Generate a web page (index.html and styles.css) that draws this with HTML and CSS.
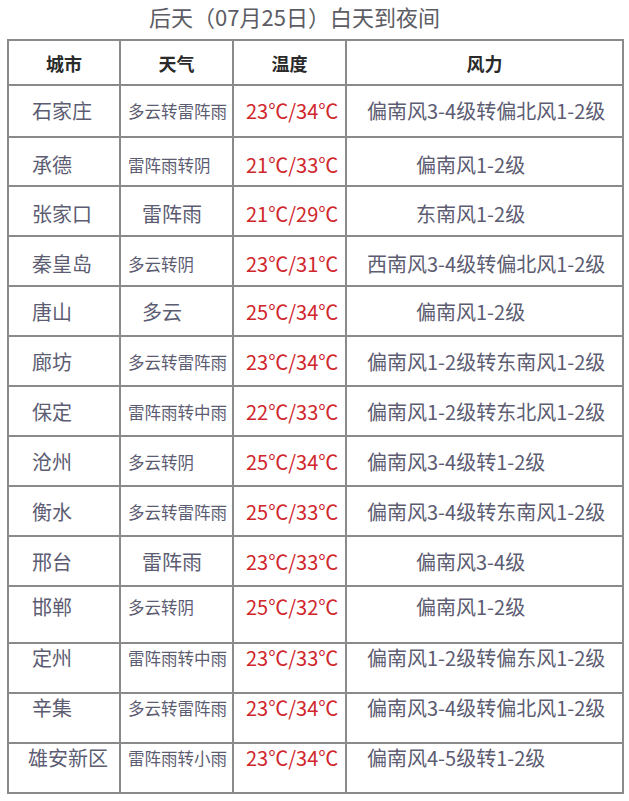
FILE: index.html
```html
<!DOCTYPE html>
<html lang="zh-CN">
<head>
<meta charset="utf-8">
<title>后天（07月25日）白天到夜间</title>
<link rel="stylesheet" href="styles.css">
</head>
<body>
<div class="page">
  <h1 class="title">后天（07月25日）白天到夜间</h1>
  <div class="grid">
    <div class="hd">城市</div><div class="hd">天气</div><div class="hd">温度</div><div class="hd">风力</div>

    <div class="c city r1">石家庄</div><div class="c wx r1">多云转雷阵雨</div><div class="c tp r1">23℃/34℃</div><div class="c wd r1">偏南风3-4级转偏北风1-2级</div>
    <div class="c city r2">承德</div><div class="c wx r2">雷阵雨转阴</div><div class="c tp r2">21℃/33℃</div><div class="c wd short r2">偏南风1-2级</div>
    <div class="c city r2">张家口</div><div class="c wx big r2">雷阵雨</div><div class="c tp r2">21℃/29℃</div><div class="c wd short r2">东南风1-2级</div>
    <div class="c city r2">秦皇岛</div><div class="c wx r2">多云转阴</div><div class="c tp r2">23℃/31℃</div><div class="c wd r2">西南风3-4级转偏北风1-2级</div>
    <div class="c city r1">唐山</div><div class="c wx big r1">多云</div><div class="c tp r1">25℃/34℃</div><div class="c wd short r1">偏南风1-2级</div>
    <div class="c city r1">廊坊</div><div class="c wx r1">多云转雷阵雨</div><div class="c tp r1">23℃/34℃</div><div class="c wd r1">偏南风1-2级转东南风1-2级</div>
    <div class="c city r1">保定</div><div class="c wx r1">雷阵雨转中雨</div><div class="c tp r1">22℃/33℃</div><div class="c wd r1">偏南风1-2级转东北风1-2级</div>
    <div class="c city r1">沧州</div><div class="c wx r1">多云转阴</div><div class="c tp r1">25℃/34℃</div><div class="c wd r1">偏南风3-4级转1-2级</div>
    <div class="c city r1">衡水</div><div class="c wx r1">多云转雷阵雨</div><div class="c tp r1">25℃/33℃</div><div class="c wd r1">偏南风3-4级转东南风1-2级</div>
    <div class="c city r1">邢台</div><div class="c wx big r1">雷阵雨</div><div class="c tp r1">23℃/33℃</div><div class="c wd short r1">偏南风3-4级</div>
    <div class="c city r3">邯郸</div><div class="c wx r3">多云转阴</div><div class="c tp r3">25℃/32℃</div><div class="c wd short r3">偏南风1-2级</div>
    <div class="c city r4">定州</div><div class="c wx r4">雷阵雨转中雨</div><div class="c tp r4">23℃/33℃</div><div class="c wd r4">偏南风1-2级转偏东风1-2级</div>
    <div class="c city r4">辛集</div><div class="c wx r4">多云转雷阵雨</div><div class="c tp r4">23℃/34℃</div><div class="c wd r4">偏南风3-4级转偏北风1-2级</div>
    <div class="c city wide r4">雄安新区</div><div class="c wx r4">雷阵雨转小雨</div><div class="c tp r4">23℃/34℃</div><div class="c wd r4">偏南风4-5级转1-2级</div>
  </div>
</div>
</body>
</html>
```

FILE: styles.css
```css
html, body {
  margin: 0;
  padding: 0;
  background: #ffffff;
}
body {
  font-family: "Noto Sans CJK SC", "Noto Sans", sans-serif;
  color: #5c5c72;
}
.page {
  width: 629px;
  height: 801px;
  overflow: hidden;
}
.title {
  margin: 0;
  height: 39px;
  line-height: 32px;
  font-size: 22px;
  font-weight: 400;
  color: #5c5c64;
  text-align: center;
  padding-right: 40px;
}
.grid {
  margin-left: 7px;
  width: 613px;
  border: 2px solid #8a8a8a;
  background: #8a8a8a;
  display: grid;
  grid-template-columns: 110px 111px 111px 275px;
  grid-template-rows: 43px 50px 47px 48px 48px 48px 48px 48px 48px 48px 48px 55px 48px 48px 48px;
  gap: 2px;
}
.grid > div {
  background: #ffffff;
  white-space: nowrap;
}
.hd {
  display: flex;
  align-items: center;
  justify-content: center;
  font-size: 18px;
  font-weight: 700;
  color: #2a2a2a;
}
.c {
  font-size: 20px;
  line-height: 24px;
}
.r1 { padding-top: 13px; }
.r2 { padding-top: 15px; }
.r3 { padding-top: 8px; }
.r4 { padding-top: 2px; }
.city { padding-left: 23px; }
.city.wide { padding-left: 19px; }
.wx {
  font-size: 16.5px;
  padding-left: 7px;
}
.wx.big {
  font-size: 20px;
  padding-left: 21px;
}
.tp {
  color: #d0262c;
  padding-left: 12px;
}
.wd { padding-left: 20px; }
.wd.short { padding-left: 69px; }
```
